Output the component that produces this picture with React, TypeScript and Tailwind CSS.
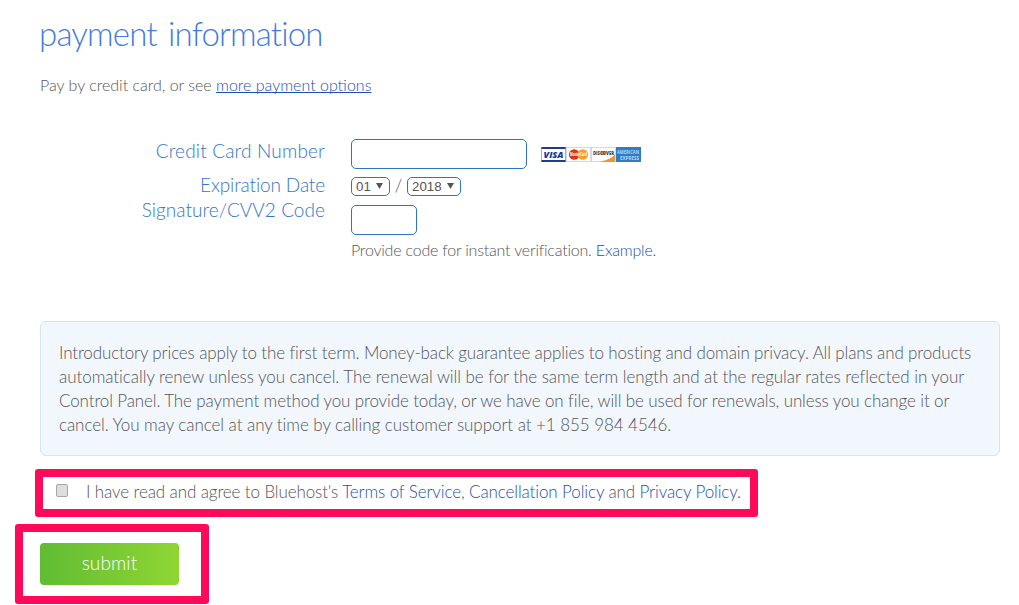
import { ReactNode } from "react";

interface FormRowProps {
  label: string;
  labelClass?: string;
  className?: string;
  children: ReactNode;
}

function FormRow({ label, labelClass = "", className = "", children }: FormRowProps) {
  return (
    <div className={`flex ${className}`}>
      <div className={`w-[285px] mr-[26px] text-right text-[19px] leading-[24px] text-[#3575c8] whitespace-nowrap ${labelClass}`}>
        {label}
      </div>
      {children}
    </div>
  );
}

function Select({ value, className = "" }: { value: string; className?: string }) {
  return (
    <button
      className={`h-[19px] flex items-center justify-between pl-1 pr-[6px] border border-[#2f74c0] rounded-[5px] bg-white text-[#555] font-['Liberation_Sans',sans-serif] text-[13.3px] leading-none font-normal ${className}`}
    >
      <span>{value}</span>
      <svg width="7" height="6" viewBox="0 0 7 6" className="mb-px">
        <path d="M0 0h7L3.5 6z" fill="#555" />
      </svg>
    </button>
  );
}

function CardLogos() {
  return (
    <svg width="100" height="15" viewBox="0 0 100 15" className="ml-[14px] mt-2">
      {/* Visa */}
      <rect width="25" height="15" fill="#fff" />
      <path d="M0 0h25v2H0zM0 13h25v2H0z" fill="#223b91" />
      <path d="M0 0h.7v15H0zM24.3 0h.7v15h-.7z" fill="#7d8fc4" />
      <text x="12.5" y="10.5" textAnchor="middle" fontFamily="Open Sans, sans-serif" fontSize="9.5" fontWeight="800" fontStyle="italic" fill="#183a94" textLength="20" lengthAdjust="spacingAndGlyphs">VISA</text>
      {/* MasterCard */}
      <rect x="25.5" y=".5" width="24" height="14" fill="#fff" stroke="#d5d9e2" />
      <circle cx="33.2" cy="7.5" r="5.3" fill="#d8341f" />
      <circle cx="41.8" cy="7.5" r="5.3" fill="#f4a12c" />
      <text x="37.5" y="9.2" textAnchor="middle" fontFamily="Open Sans, sans-serif" fontSize="4.4" fontWeight="700" fill="#fff" textLength="17" lengthAdjust="spacingAndGlyphs">MasterCard</text>
      {/* Discover */}
      <rect x="50.5" y=".5" width="24" height="14" fill="#fff" stroke="#d5d9e2" />
      <path d="M74 7.5C71 11 65 13.8 57 15h17z" fill="#e8963a" />
      <circle cx="62" cy="6" r="2" fill="#ef8a2b" />
      <text x="62.5" y="7.8" textAnchor="middle" fontFamily="Open Sans, sans-serif" fontSize="5" fontWeight="800" fill="#444" textLength="21" lengthAdjust="spacingAndGlyphs">DISCOVER</text>
      {/* American Express */}
      <rect x="75" width="25" height="15" fill="#2f7cc4" />
      <text x="76" y="7" fontFamily="Open Sans, sans-serif" fontSize="5.6" fontWeight="700" fill="#b5d8f5" textLength="22" lengthAdjust="spacingAndGlyphs">AMERICAN</text>
      <text x="79" y="13" fontFamily="Open Sans, sans-serif" fontSize="5.6" fontWeight="700" fill="#b5d8f5" textLength="19" lengthAdjust="spacingAndGlyphs">EXPRESS</text>
    </svg>
  );
}

export default function App() {
  const terms = [
    {
      text: "Introductory prices apply to the first term. Money-back guarantee applies to hosting and domain privacy. All plans and products",
      tracking: "tracking-[-0.134px]",
    },
    {
      text: "automatically renew unless you cancel. The renewal will be for the same term length and at the regular rates reflected in your",
      tracking: "tracking-[-0.055px]",
    },
    {
      text: "Control Panel. The payment method you provide today, or we have on file, will be used for renewals, unless you change it or",
      tracking: "tracking-[-0.12px]",
    },
    {
      text: "cancel. You may cancel at any time by calling customer support at +1 855 984 4546.",
      tracking: "tracking-[-0.06px]",
    },
  ];

  return (
    <div className="w-[1019px] h-[605px] overflow-hidden bg-white pl-[15px] font-['Lato',sans-serif] font-light text-[#555]">
      <div className="pl-[25px]">
        <h1 className="-ml-px pt-[13px] text-[33px] leading-[40px] tracking-[-0.8px] [word-spacing:3px] font-light text-[#3f7dd8] whitespace-nowrap">
          payment information
        </h1>
        <p className="mt-[20px] text-[16px] leading-[24px] whitespace-nowrap">
          Pay by credit card, or see{" "}
          <a href="#" className="text-[#1d4fb0] underline underline-offset-1 [text-decoration-skip-ink:none]">more payment options</a>
        </p>

        {/* Card details */}
        <form className="mt-[42px]">
          <FormRow label="Credit Card Number" labelClass="tracking-[0.17px]" className="h-[38px]">
            <input className="w-[176px] h-[30px] border border-[#2f74c0] rounded-[5px] outline-none" />
            <CardLogos />
          </FormRow>
          <FormRow label="Expiration Date" labelClass="tracking-[-0.13px]" className="h-[28px] -mt-[4px]">
            <div className="flex pt-[4px]">
              <Select value="01" className="w-[39px]" />
              <span className="w-[17px] text-center text-[17px] leading-[18px]">/</span>
              <Select value="2018" className="w-[54px]" />
            </div>
          </FormRow>
          <FormRow label="Signature/CVV2 Code" labelClass="tracking-[0.05px]" className="h-[36px] -mt-[3px]">
            <input className="mt-[7px] w-[66px] h-[30px] border border-[#2f74c0] rounded-[5px] outline-none" />
          </FormRow>
          <p className="ml-[311px] mt-[4px] text-[16px] leading-[24px] tracking-[-0.2px] whitespace-nowrap">
            Provide code for instant verification.{" "}
            <a href="#" className="text-[#1d4fb0]">Example.</a>
          </p>
        </form>

        <div className="mt-[59px] w-[960px] h-[135px] border border-[#cfe6f8] rounded-[6px] bg-[#f2f7fe] pl-[18px] pt-[19px] text-[17px] leading-[24px]">
          {terms.map((line) => (
            <p key={line.text} className={`whitespace-nowrap ${line.tracking}`}>{line.text}</p>
          ))}
        </div>
      </div>

      <div className="ml-[20px] mt-[13px] w-[723px] h-[48px] border-8 border-[#ff0a5a] rounded-[3px] flex items-center">
        <input
          type="checkbox"
          className="appearance-none ml-[13px] mb-[6px] w-[12px] h-[13px] border border-[#a6a6a6] rounded-[2px] bg-[#dedee0]"
        />
        <span className="ml-[17px] mb-[2px] pl-px text-[17px] leading-[24px] tracking-[-0.11px] whitespace-nowrap">
          I have read and agree to Bluehost's <a href="#" className="text-[#1d4fb0]">Terms of Service</a>,{" "}
          <a href="#" className="text-[#1d4fb0]">Cancellation Policy</a> and{" "}
          <a href="#" className="text-[#1d4fb0]">Privacy Policy.</a>
        </span>
      </div>

      <div className="mt-[7px] w-[194px] h-[80px] border-8 border-[#ff0a5a] rounded-[3px] pl-[17px] pt-[11px]">
        <button className="w-[139px] h-[42px] pb-px rounded-[4px] bg-linear-to-r from-[#60bc33] to-[#8fd634] text-white text-[19px] tracking-[0.1px] font-light">
          submit
        </button>
      </div>
    </div>
  );
}
